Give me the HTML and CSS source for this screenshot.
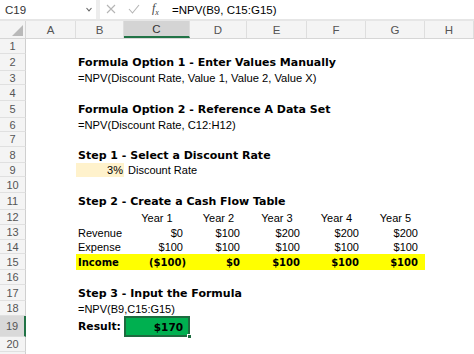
FILE: index.html
```html
<!DOCTYPE html>
<html lang="en">
<head>
    <meta charset="UTF-8">
    <title>NPV Formula</title>
    <link rel="stylesheet" href="styles.css">
</head>
<body>
    <div class="formula-bar">
        <div class="name-box">
            <span>C19</span>
            <svg width="6" height="5" viewBox="0 0 6 5"><path d="M0.5 1 L3 3.8 L5.5 1" fill="none" stroke="#666" stroke-width="1.1"/></svg>
        </div>
        <div class="bar-sep"></div>
        <div class="bar-icons">
            <svg width="10" height="10" viewBox="0 0 10 10"><path d="M1 1 L9 9 M9 1 L1 9" stroke="#b5b5b5" stroke-width="1.1"/></svg>
            <svg width="12" height="10" viewBox="0 0 12 10"><path d="M1 5 L4.5 9 L11 1" fill="none" stroke="#b5b5b5" stroke-width="1.1"/></svg>
            <span class="fx">f<sub>x</sub></span>
        </div>
        <div class="formula">=NPV(B9, C15:G15)</div>
    </div>

    <div class="sheet">
        <div class="row head">
            <div class="corner"><svg width="11" height="11" viewBox="0 0 11 11"><path d="M11 0 L11 11 L0 11 Z" fill="#b9b9b9"/></svg></div>
            <div class="col-h">A</div>
            <div class="col-h">B</div>
            <div class="col-h active">C</div>
            <div class="col-h">D</div>
            <div class="col-h">E</div>
            <div class="col-h">F</div>
            <div class="col-h">G</div>
            <div class="col-h">H</div>
        </div>

        <div class="row h15"><div class="rn">1</div></div>
        <div class="row h17"><div class="rn">2</div><div class="cell span title">Formula Option 1 - Enter Values Manually</div></div>
        <div class="row h14"><div class="rn">3</div><div class="cell span formula-text">=NPV(Discount Rate, Value 1, Value 2, Value X)</div></div>
        <div class="row h16"><div class="rn">4</div></div>
        <div class="row h17"><div class="rn">5</div><div class="cell span title">Formula Option 2 - Reference A Data Set</div></div>
        <div class="row h14"><div class="rn">6</div><div class="cell span formula-text">=NPV(Discount Rate, C12:H12)</div></div>
        <div class="row h15"><div class="rn">7</div></div>
        <div class="row h16"><div class="rn">8</div><div class="cell span title">Step 1 - Select a Discount Rate</div></div>
        <div class="row h14">
            <div class="rn">9</div>
            <div class="cell"></div>
            <div class="cell num rate">3%</div>
            <div class="cell wide">Discount Rate</div>
        </div>
        <div class="row h16"><div class="rn">10</div></div>
        <div class="row h17"><div class="rn">11</div><div class="cell span title">Step 2 - Create a Cash Flow Table</div></div>
        <div class="row h15">
            <div class="rn">12</div>
            <div class="cell"></div>
            <div class="cell"></div>
            <div class="cell ctr">Year 1</div>
            <div class="cell ctr">Year 2</div>
            <div class="cell ctr">Year 3</div>
            <div class="cell ctr">Year 4</div>
            <div class="cell ctr">Year 5</div>
        </div>
        <div class="row h15">
            <div class="rn">13</div>
            <div class="cell"></div>
            <div class="cell">Revenue</div>
            <div class="cell num">$0</div>
            <div class="cell num">$100</div>
            <div class="cell num">$200</div>
            <div class="cell num">$200</div>
            <div class="cell num">$200</div>
        </div>
        <div class="row h14">
            <div class="rn">14</div>
            <div class="cell"></div>
            <div class="cell">Expense</div>
            <div class="cell num">$100</div>
            <div class="cell num">$100</div>
            <div class="cell num">$100</div>
            <div class="cell num">$100</div>
            <div class="cell num">$100</div>
        </div>
        <div class="row h16">
            <div class="rn">15</div>
            <div class="cell"></div>
            <div class="cell income strong">Income</div>
            <div class="cell income strong num neg">($100)</div>
            <div class="cell income strong num">$0</div>
            <div class="cell income strong num">$100</div>
            <div class="cell income strong num">$100</div>
            <div class="cell income strong num">$100</div>
        </div>
        <div class="row h15"><div class="rn">16</div></div>
        <div class="row h16"><div class="rn">17</div><div class="cell span title">Step 3 - Input the Formula</div></div>
        <div class="row h15"><div class="rn">18</div><div class="cell span">=NPV(B9,C15:G15)</div></div>
        <div class="row h20">
            <div class="rn active">19</div>
            <div class="cell"></div>
            <div class="cell strong">Result:</div>
            <div class="cell strong num result">$170<span class="handle"></span></div>
        </div>
        <div class="row h15"><div class="rn">20</div></div>
        <div class="row h15"><div class="rn"></div></div>
    </div>
</body>
</html>
```

FILE: styles.css
```css
* {
    margin: 0;
    padding: 0;
    box-sizing: border-box;
}

body {
    width: 474px;
    height: 354px;
    overflow: hidden;
    background: #fff;
    font-family: "Liberation Sans", Arial, sans-serif;
    color: #000;
}

/* formula bar */
.formula-bar {
    display: flex;
    align-items: center;
    height: 21px;
    border-bottom: 2px solid #e6e6e6;
}

.name-box {
    width: 96px;
    height: 100%;
    display: flex;
    align-items: center;
    justify-content: space-between;
    padding: 0 4px 0 5px;
    font-size: 11.5px;
    color: #333;
}

.bar-sep {
    width: 4px;
    height: 100%;
    background: #ededed;
}

.bar-icons {
    width: 72px;
    display: flex;
    align-items: center;
    gap: 12px;
    padding-left: 6px;
}

.fx {
    font-family: "Liberation Serif", serif;
    font-style: italic;
    font-size: 12px;
    color: #444;
}

.fx sub {
    font-size: 8px;
}

.formula {
    font-size: 11.5px;
}

/* sheet */
.row {
    display: grid;
    grid-template-columns: 26px 50px 48px 66px 57px 60px 59px 59px 1fr;
    height: 15px;
}

.h14 { height: 14px; }
.h15 { height: 15px; }
.h16 { height: 16px; }
.h17 { height: 17px; }
.h20 { height: 21px; }

.head {
    height: 18px;
    background: #f4f4f4;
    border-bottom: 1px solid #d6d6d6;
}

.corner {
    display: flex;
    align-items: flex-end;
    justify-content: flex-end;
    padding: 0 2px 2px 0;
    border-right: 1px solid #d6d6d6;
}

.col-h {
    display: flex;
    align-items: center;
    justify-content: center;
    font-size: 11.5px;
    color: #555;
    border-right: 1px solid #dedede;
}

.col-h.active {
    background: #d4d4d4;
    border-bottom: 2px solid #217346;
    color: #333;
}

.rn {
    display: flex;
    align-items: center;
    justify-content: center;
    background: #f4f4f4;
    border-right: 1px solid #cfcfcf;
    border-bottom: 1px solid #e0e0e0;
    font-size: 11px;
    color: #555;
}

.rn.active {
    background: #d9d9d9;
    border-right: 2px solid #217346;
}

.cell {
    display: flex;
    align-items: center;
    padding: 0 2px;
    white-space: nowrap;
    font-size: 11px;
}

.span {
    grid-column: 3 / -1;
}

.wide {
    grid-column: 4 / -1;
    padding-left: 4px;
}

.title {
    font-family: "DejaVu Sans", sans-serif;
    font-weight: bold;
    font-size: 11px;
}

.formula-text {
    font-size: 11.2px;
}

.num {
    justify-content: flex-end;
    padding-right: 7px;
}

.num.neg {
    padding-right: 4px;
}

.ctr {
    justify-content: center;
}

.rate {
    background: #fff2cc;
    padding-right: 1px;
}

.strong {
    font-family: "DejaVu Sans", sans-serif;
    font-weight: bold;
    font-size: 10.8px;
}

.income {
    background: #ffff00;
    font-size: 10px;
}

.result {
    position: relative;
    background: #00b050;
    border: 2px solid #1d6b3f;
    font-size: 10.5px;
    padding-right: 5px;
}

.handle {
    position: absolute;
    right: -4px;
    bottom: -4px;
    width: 5px;
    height: 5px;
    background: #1d6b3f;
    border: 1px solid #fff;
}
```
